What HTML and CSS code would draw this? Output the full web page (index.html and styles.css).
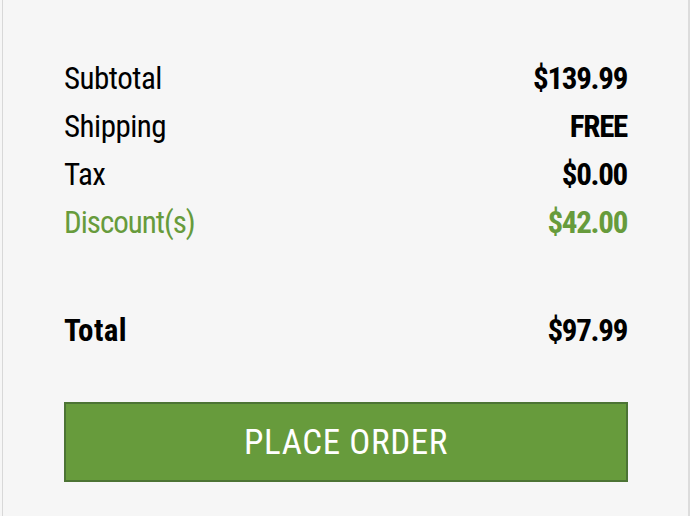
FILE: index.html
```html
<!DOCTYPE html>
<html>
<head>
<meta charset="utf-8">
<link rel="stylesheet" href="styles.css">
</head>
<body>
<div class="panel">
  <div class="rows">
    <div class="row"><span class="label">Subtotal</span><span class="value">$139.99</span></div>
    <div class="row"><span class="label">Shipping</span><span class="value">FREE</span></div>
    <div class="row"><span class="label">Tax</span><span class="value">$0.00</span></div>
    <div class="row discount"><span class="label">Discount(s)</span><span class="value">$42.00</span></div>
  </div>
  <div class="row total"><span class="label">Total</span><span class="value">$97.99</span></div>
  <button class="place-order">PLACE ORDER</button>
</div>
</body>
</html>
```
FILE: styles.css
```css
html, body {
  margin: 0;
  padding: 0;
  background: #f6f6f6;
}
body {
  font-family: "Roboto Condensed", Roboto, sans-serif;
  color: #000;
}
.panel {
  margin-left: 2px;
  height: 516px;
  box-sizing: border-box;
  border-left: 1px solid #d8d8d8;
  border-right: 2px solid #dcdcdc;
  background: #f6f6f6;
  padding: 55px 60px 0 61px;
  display: flex;
  flex-direction: column;
}
.row {
  display: flex;
  justify-content: space-between;
  align-items: baseline;
  font-size: 31px;
  line-height: 48px;
  height: 48px;
}
.label {
  letter-spacing: -0.5px;
}
.discount .label {
  letter-spacing: -1px;
}
.value {
  font-weight: 700;
  letter-spacing: -1.3px;
  margin-right: 1px;
}
.discount {
  color: #679b3c;
}
.total {
  margin-top: 60px;
}
.total .label {
  font-weight: 700;
  letter-spacing: 0.4px;
}
.place-order {
  margin-top: 47px;
  height: 80px;
  width: 100%;
  box-sizing: border-box;
  background: #679b3c;
  border: 2px solid #4c7434;
  color: #fff;
  font-family: "Roboto Condensed", Roboto, sans-serif;
  font-size: 35px;
  letter-spacing: 0.6px;
  padding: 0;
  cursor: pointer;
}
```
